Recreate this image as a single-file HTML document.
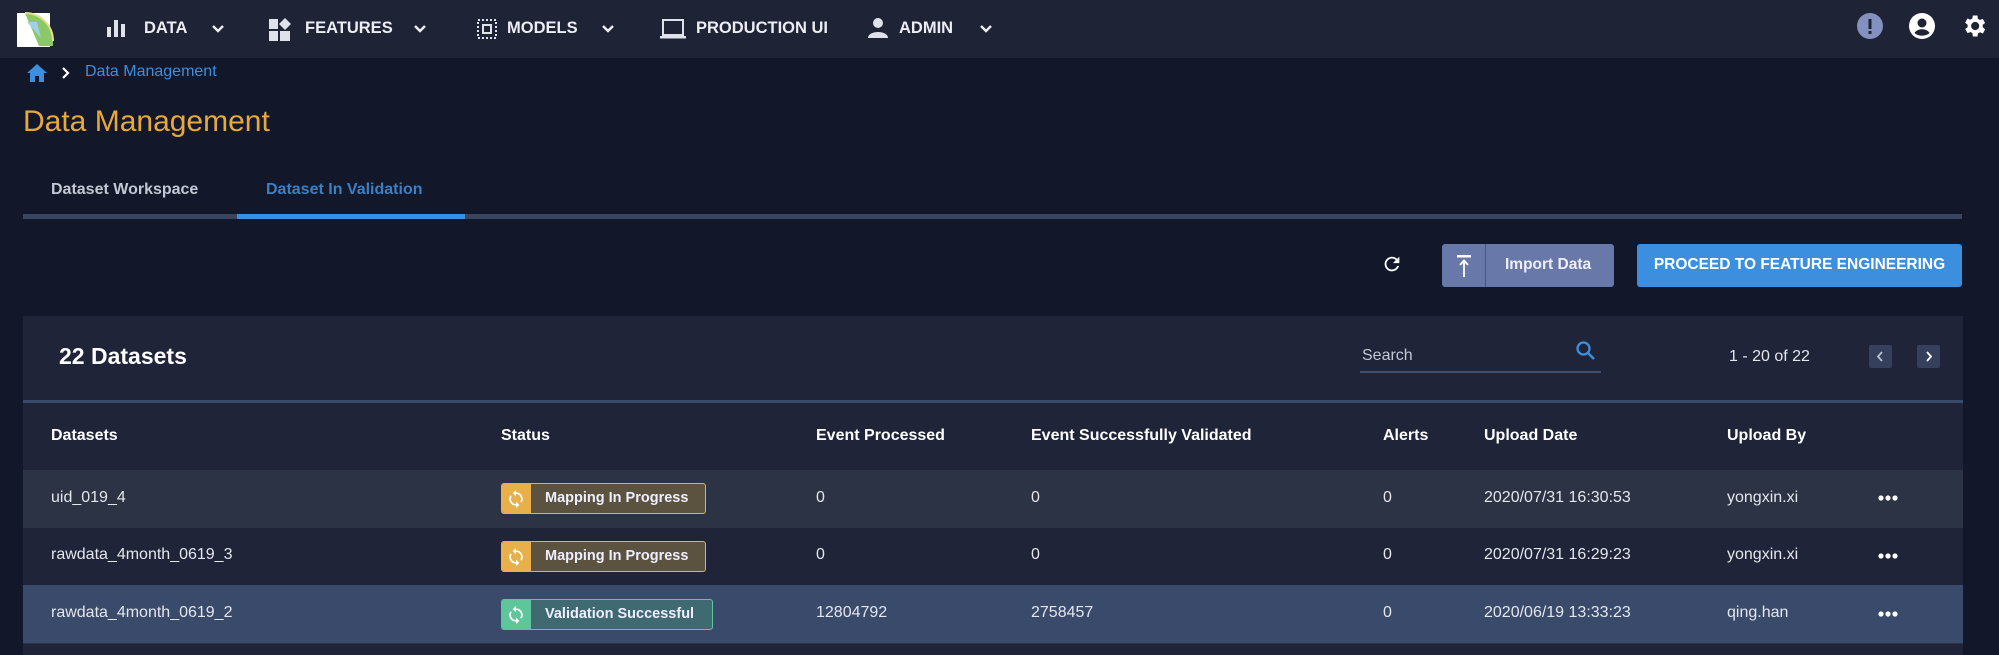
<!DOCTYPE html>
<html><head><meta charset="utf-8"><style>
*{margin:0;padding:0;box-sizing:border-box}
body{width:1999px;height:655px;background:#12172a;font-family:"Liberation Sans",sans-serif;color:#e6e8ee;position:relative;overflow:hidden}
.a{position:absolute;white-space:nowrap}
.nav{left:0;top:0;width:1999px;height:58px;background:#1f2336}
.nt{font-size:16.5px;font-weight:bold;color:#eceef3;top:19px}
.chev{top:21px}
.th{font-size:16px;font-weight:bold;color:#fff;top:427px}
.td{font-size:16px;color:#e4e6ec}
.badge{height:31px;border-radius:3px;border:1.5px solid;overflow:hidden}
.badge .ic{position:absolute;left:0;top:0;width:29px;height:100%}
.badge .bt{position:absolute;left:43px;top:6px;font-size:14.5px;font-weight:bold;color:#eef}
</style></head><body>
<div class="a nav"></div>
<svg class="a" style="left:17px;top:10px" width="37" height="38" viewBox="0 0 37 38">
<rect x="0" y="3" width="33" height="34" fill="#fff"/>
<path d="M8 3 A28 28 0 0 1 36 31 L36 36 L22 36 Z" fill="#8cc86a"/>
<path d="M8 3 A28 28 0 0 1 36 31" stroke="#e6e08a" stroke-width="2" fill="none"/>
<path d="M10 12 L20 12 L24 28 Z" fill="#9fd0e8"/>
</svg>
<svg class="a" style="left:106px;top:18px" width="20" height="20"><rect x="1" y="9" width="4" height="10" fill="#dfe2ea"/><rect x="8" y="2" width="4" height="17" fill="#dfe2ea"/><rect x="15" y="6" width="4" height="13" fill="#dfe2ea"/></svg>
<div class="a nt" style="left:144px">DATA</div>
<svg class="a chev" style="left:210px" width="16" height="16"><path d="M3 5 L8 10 L13 5" stroke="#eceef3" stroke-width="2.4" fill="none"/></svg>
<svg class="a" style="left:268px;top:18px" width="24" height="24"><rect x="1" y="1" width="9" height="10" fill="#dfe2ea"/><rect x="1" y="13" width="9" height="10" fill="#dfe2ea"/><rect x="12" y="13" width="10" height="10" fill="#dfe2ea"/><path d="M17 0 L23 6 L17 12 L11 6Z" fill="#dfe2ea"/></svg>
<div class="a nt" style="left:305px">FEATURES</div>
<svg class="a chev" style="left:412px" width="16" height="16"><path d="M3 5 L8 10 L13 5" stroke="#eceef3" stroke-width="2.4" fill="none"/></svg>
<svg class="a" style="left:475px;top:17px" width="24" height="24"><rect x="3" y="3" width="18" height="18" fill="none" stroke="#dfe2ea" stroke-width="2" stroke-dasharray="2 2"/><rect x="8" y="8" width="8" height="8" fill="none" stroke="#dfe2ea" stroke-width="2"/></svg>
<div class="a nt" style="left:507px">MODELS</div>
<svg class="a chev" style="left:600px" width="16" height="16"><path d="M3 5 L8 10 L13 5" stroke="#eceef3" stroke-width="2.4" fill="none"/></svg>
<svg class="a" style="left:659px;top:17px" width="28" height="24"><rect x="4" y="3" width="20" height="15" fill="none" stroke="#dfe2ea" stroke-width="2"/><rect x="1" y="19" width="26" height="2.5" fill="#dfe2ea"/></svg>
<div class="a nt" style="left:696px">PRODUCTION UI</div>
<svg class="a" style="left:866px;top:16px" width="24" height="24"><circle cx="12" cy="7" r="5" fill="#dfe2ea"/><path d="M2 22 C2 14 22 14 22 22Z" fill="#dfe2ea"/></svg>
<div class="a nt" style="left:899px">ADMIN</div>
<svg class="a chev" style="left:978px" width="16" height="16"><path d="M3 5 L8 10 L13 5" stroke="#eceef3" stroke-width="2.4" fill="none"/></svg>
<svg class="a" style="left:1857px;top:13px" width="26" height="26"><circle cx="13" cy="13" r="13" fill="#8291bf"/><rect x="11.5" y="6" width="3" height="10" fill="#1f2336"/><rect x="11.5" y="18" width="3" height="3" fill="#1f2336"/></svg>
<svg class="a" style="left:1909px;top:13px" width="26" height="26"><circle cx="13" cy="13" r="13" fill="#fff"/><circle cx="13" cy="10" r="4.5" fill="#1f2336"/><path d="M5.5 20 C8 15 18 15 20.5 20 C17 23.5 9 23.5 5.5 20Z" fill="#1f2336"/></svg>
<svg class="a" style="left:1960px;top:12px" width="28" height="28" viewBox="0 0 24 24"><path fill="#fff" d="M19.4 13a7.5 7.5 0 0 0 0-2l2.1-1.6-2-3.5-2.5 1a7.3 7.3 0 0 0-1.7-1L15 3h-4l-.4 2.6a7.3 7.3 0 0 0-1.700 1l-2.5-1-2 3.5L6.6 11a7.5 7.5 0 0 0 0 2l-2.1 1.6 2 3.5 2.5-1a7.3 7.3 0 0 0 1.7 1L11 21h4l.4-2.6a7.3 7.3 0 0 0 1.7-1l2.5 1 2-3.5zM13 15.5a3.5 3.5 0 1 1 0-7 3.5 3.5 0 0 1 0 7z"/></svg>
<svg class="a" style="left:26px;top:63px" width="22" height="20"><path d="M11 1 L21 10 L18 10 L18 19 L13 19 L13 13 L9 13 L9 19 L4 19 L4 10 L1 10Z" fill="#3b8fde"/></svg>
<svg class="a" style="left:60px;top:66px" width="12" height="14"><path d="M3 2 L8 7 L3 12" stroke="#fff" stroke-width="2.2" fill="none"/></svg>
<div class="a" style="left:85px;top:63px;font-size:16px;color:#3b8fde">Data Management</div>
<div class="a" style="left:23px;top:105px;font-size:30px;color:#e8a93a">Data Management</div>
<div class="a" style="left:51px;top:181px;font-size:16px;font-weight:bold;color:#c4c8d2">Dataset Workspace</div>
<div class="a" style="left:266px;top:181px;font-size:16px;font-weight:bold;color:#3b7fc4">Dataset In Validation</div>
<div class="a" style="left:23px;top:214px;width:1939px;height:5px;background:#394560"></div>
<div class="a" style="left:237px;top:214px;width:228px;height:5px;background:#3b8fde"></div>
<svg class="a" style="left:1381px;top:253px" width="22" height="22" viewBox="0 0 24 24"><path d="M17.6 6.4A8 8 0 1 0 19.7 14h-2.1a6 6 0 1 1-1.4-6.2L13 11h7V4z" fill="#fff"/></svg>
<div class="a" style="left:1442px;top:244px;width:172px;height:43px;background:#6878a8;border-radius:3px"></div>
<div class="a" style="left:1485px;top:244px;width:1px;height:43px;background:#4a5680"></div>
<svg class="a" style="left:1454px;top:253px" width="20" height="26"><rect x="3" y="2" width="14" height="2.5" fill="#fff"/><path d="M10 24 L10 8 M6 12 L10 7.5 L14 12" stroke="#fff" stroke-width="1.8" fill="none"/></svg>
<div class="a" style="left:1505px;top:256px;font-size:15.5px;font-weight:bold;color:#eef">Import Data</div>
<div class="a" style="left:1637px;top:244px;width:325px;height:43px;background:#3b8fde;border-radius:3px"></div>
<div class="a" style="left:1637px;top:256px;width:325px;text-align:center;font-size:15.5px;font-weight:bold;color:#fff">PROCEED TO FEATURE ENGINEERING</div>
<div class="a" style="left:23px;top:316px;width:1940px;height:339px;background:#1f2438"></div>
<div class="a" style="left:59px;top:343px;font-size:23px;font-weight:bold;color:#fff">22 Datasets</div>
<div class="a" style="left:1362px;top:347px;font-size:16px;color:#c4c8d2">Search</div>
<svg class="a" style="left:1575px;top:340px" width="22" height="22"><circle cx="8.5" cy="8.5" r="6" stroke="#3b8fde" stroke-width="2.3" fill="none"/><path d="M13 13 L19 19" stroke="#3b8fde" stroke-width="2.6"/></svg>
<div class="a" style="left:1360px;top:371px;width:241px;height:2px;background:#3e5070"></div>
<div class="a" style="left:1729px;top:348px;font-size:16px;color:#e4e6ec">1 - 20 of 22</div>
<div class="a" style="left:1869px;top:345px;width:23px;height:23px;background:#34405c;border-radius:2px"></div>
<div class="a" style="left:1917px;top:345px;width:23px;height:23px;background:#34405c;border-radius:2px"></div>
<svg class="a" style="left:1873px;top:349px" width="15" height="15"><path d="M9 3 L5 7.5 L9 12" stroke="#b8c0d6" stroke-width="1.8" fill="none"/></svg>
<svg class="a" style="left:1921px;top:349px" width="15" height="15"><path d="M6 3 L10 7.5 L6 12" stroke="#fff" stroke-width="1.8" fill="none"/></svg>
<div class="a" style="left:23px;top:400px;width:1940px;height:3px;background:#3a4a6a"></div>
<div class="a th" style="left:51px">Datasets</div>
<div class="a th" style="left:501px">Status</div>
<div class="a th" style="left:816px">Event Processed</div>
<div class="a th" style="left:1031px">Event Successfully Validated</div>
<div class="a th" style="left:1383px">Alerts</div>
<div class="a th" style="left:1484px">Upload Date</div>
<div class="a th" style="left:1727px">Upload By</div>
<div class="a" style="left:23px;top:470px;width:1940px;height:58px;background:#2b3345"></div>
<div class="a" style="left:23px;top:585px;width:1940px;height:58px;background:#3a4a6a"></div>
<div class="a" style="left:23px;top:643px;width:1940px;height:12px;background:#1f2438;border-top:1px solid #2a3248"></div>
<div class="a td" style="left:51px;top:489px">uid_019_4</div>
<div class="a td" style="left:816px;top:489px">0</div>
<div class="a td" style="left:1031px;top:489px">0</div>
<div class="a td" style="left:1383px;top:489px">0</div>
<div class="a td" style="left:1484px;top:489px">2020/07/31 16:30:53</div>
<div class="a td" style="left:1727px;top:489px">yongxin.xi</div>
<div class="a td" style="left:51px;top:546px">rawdata_4month_0619_3</div>
<div class="a td" style="left:816px;top:546px">0</div>
<div class="a td" style="left:1031px;top:546px">0</div>
<div class="a td" style="left:1383px;top:546px">0</div>
<div class="a td" style="left:1484px;top:546px">2020/07/31 16:29:23</div>
<div class="a td" style="left:1727px;top:546px">yongxin.xi</div>
<div class="a td" style="left:51px;top:604px">rawdata_4month_0619_2</div>
<div class="a td" style="left:816px;top:604px">12804792</div>
<div class="a td" style="left:1031px;top:604px">2758457</div>
<div class="a td" style="left:1383px;top:604px">0</div>
<div class="a td" style="left:1484px;top:604px">2020/06/19 13:33:23</div>
<div class="a td" style="left:1727px;top:604px">qing.han</div>
<svg class="a" style="left:1877px;top:494px" width="22" height="8"><circle cx="4" cy="4" r="2.6" fill="#fff"/><circle cx="11" cy="4" r="2.6" fill="#fff"/><circle cx="18" cy="4" r="2.6" fill="#fff"/></svg>
<svg class="a" style="left:1877px;top:552px" width="22" height="8"><circle cx="4" cy="4" r="2.6" fill="#fff"/><circle cx="11" cy="4" r="2.6" fill="#fff"/><circle cx="18" cy="4" r="2.6" fill="#fff"/></svg>
<svg class="a" style="left:1877px;top:610px" width="22" height="8"><circle cx="4" cy="4" r="2.6" fill="#fff"/><circle cx="11" cy="4" r="2.6" fill="#fff"/><circle cx="18" cy="4" r="2.6" fill="#fff"/></svg>
<div class="a badge" style="left:501px;top:483px;width:205px;background:#5c5240;border-color:#e8b04a"><div class="ic" style="background:#e8b04a"></div><div class="bt">Mapping In Progress</div></div>
<div class="a badge" style="left:501px;top:541px;width:205px;background:#5c5240;border-color:#e8b04a"><div class="ic" style="background:#e8b04a"></div><div class="bt">Mapping In Progress</div></div>
<div class="a badge" style="left:501px;top:599px;width:212px;background:#3f6a72;border-color:#5ec69a"><div class="ic" style="background:#5ec69a"></div><div class="bt">Validation Successful</div></div>
<svg class="a" style="left:506px;top:489px" width="20" height="20" viewBox="0 0 24 24"><path d="M12 4V1L8 5l4 4V6a6 6 0 0 1 5.2 9l1.5 1.5A8 8 0 0 0 12 4zm0 14a6 6 0 0 1-5.2-9L5.3 7.5A8 8 0 0 0 12 20v3l4-4-4-4z" fill="#fff"/></svg>
<svg class="a" style="left:506px;top:547px" width="20" height="20" viewBox="0 0 24 24"><path d="M12 4V1L8 5l4 4V6a6 6 0 0 1 5.2 9l1.5 1.5A8 8 0 0 0 12 4zm0 14a6 6 0 0 1-5.2-9L5.3 7.5A8 8 0 0 0 12 20v3l4-4-4-4z" fill="#fff"/></svg>
<svg class="a" style="left:506px;top:605px" width="20" height="20" viewBox="0 0 24 24"><path d="M12 4V1L8 5l4 4V6a6 6 0 0 1 5.2 9l1.5 1.5A8 8 0 0 0 12 4zm0 14a6 6 0 0 1-5.2-9L5.3 7.5A8 8 0 0 0 12 20v3l4-4-4-4z" fill="#fff"/></svg>
</body></html>
